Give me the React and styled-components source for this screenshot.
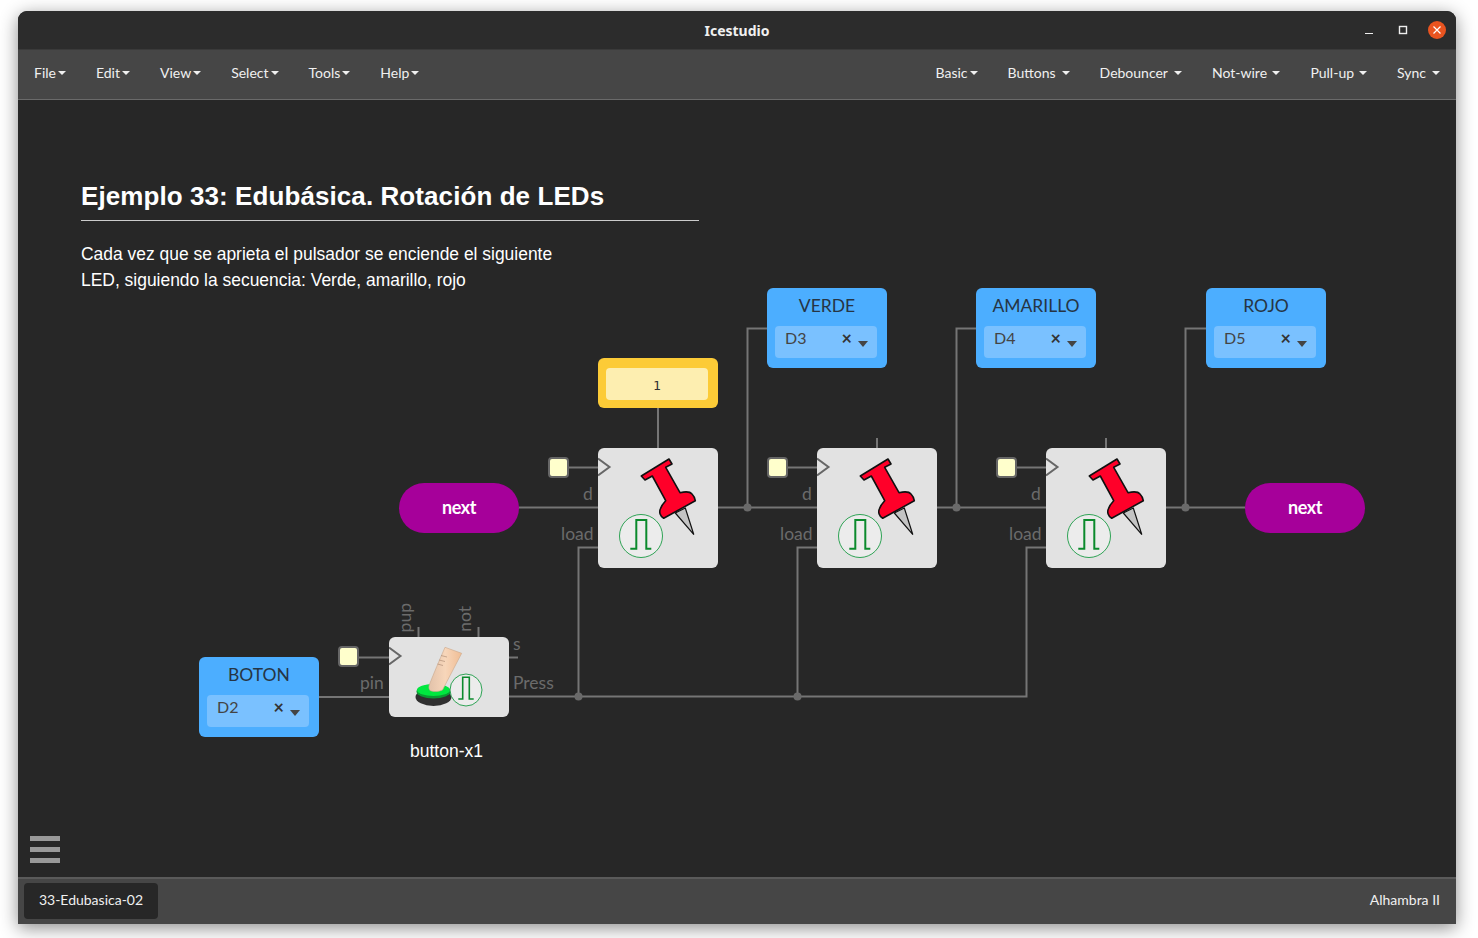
import React from 'react';
import styled, { createGlobalStyle } from 'styled-components';

const Global = createGlobalStyle`
  html, body { margin: 0; padding: 0; height: 100%; overflow: hidden; background: #fff; }
  * { box-sizing: border-box; }
`;

const Win = styled.div`
  position: relative;
  width: 1438px;
  height: 913px;
  margin: 11px 0 0 18px;
  display: flex;
  flex-direction: column;
  border-radius: 9px 9px 0 0;
  overflow: hidden;
  background: #272727;
  font-family: Lato, sans-serif;
`;

const Shadow = styled.div`
  width: 1438px;
  height: 913px;
  position: absolute;
  left: 18px;
  top: 11px;
  border-radius: 9px 9px 0 0;
  box-shadow: 0 4px 18px rgba(0, 0, 0, 0.45);
`;

const TitleBar = styled.div`
  height: 38px;
  flex: none;
  display: flex;
  align-items: center;
  justify-content: center;
  position: relative;
  background: #2c2c2c;
  color: #f0f0f0;
  font: 700 14px "Noto Sans", sans-serif;
`;

const WinButtons = styled.div`
  position: absolute;
  right: 7px;
  top: 10px;
  display: flex;
  align-items: center;
`;

const MenuBar = styled.div`
  height: 51px;
  flex: none;
  display: flex;
  justify-content: space-between;
  padding: 0 16px 5px;
  background: #464646;
  border-top: 1px solid #3a3a3a;
  border-bottom: 1px solid #6a6a6a;
`;

const MenuGroup = styled.div`
  display: flex;
  align-items: center;
  gap: 30px;
`;

const MenuItem = styled.div`
  display: flex;
  align-items: center;
  color: #f0f0f0;
  font-size: 14px;
`;

const Caret = styled.span`
  width: 0;
  height: 0;
  margin-left: ${p => p.$gap}px;
  margin-top: 2px;
  border-left: 4px solid transparent;
  border-right: 4px solid transparent;
  border-top: 4px solid #f0f0f0;
`;

const Canvas = styled.div`
  flex: 1;
  position: relative;
  background: #272727;
`;

const Wires = styled.svg`
  position: absolute;
  left: 0;
  top: 0;
`;

const Note = styled.div`
  position: absolute;
  left: 63px;
  top: 79px;
  width: 618px;
  color: #fff;
  font-family: "Liberation Sans", sans-serif;
`;

const NoteTitle = styled.h1`
  margin: 0;
  height: 42px;
  font-size: 26px;
  line-height: 34px;
  font-weight: 700;
  letter-spacing: 0.08px;
  border-bottom: 1px solid #ccc;
`;

const NoteText = styled.p`
  margin: 20px 0 0;
  font-size: 17.45px;
  line-height: 26px;
`;

const Placed = styled.div`
  position: absolute;
  left: ${p => p.$x - 18}px;
  top: ${p => p.$y - 100}px;
`;

const PinBox = styled(Placed)`
  width: 120px;
  height: 80px;
  padding: 6px 10px 0 8px;
  border-radius: 6px;
  background: #4caeff;
  text-align: center;
  color: #263544;
  font-size: 17.5px;
  line-height: 24px;
`;

const PinTitle = styled.div`
  margin-right: -2px;
`;

const PinSelect = styled.div`
  height: 32px;
  margin-top: 8px;
  padding: 0 9px 0 10px;
  display: flex;
  align-items: flex-start;
  border-radius: 4px;
  background: #7ac1ff;
  color: #444;
  font-size: 16px;
  line-height: 23px;
`;

const PinValue = styled.span`
  flex: 1;
  text-align: left;
`;

const PinClear = styled.span`
  margin-right: 6px;
  color: #333;
  font-weight: 700;
  font-size: 18px;
  line-height: 24px;
`;

const PinCaret = styled.span`
  width: 0;
  height: 0;
  margin-top: 15px;
  border-left: 5px solid transparent;
  border-right: 5px solid transparent;
  border-top: 6px solid #444;
`;

const Constant = styled(Placed)`
  width: 120px;
  height: 50px;
  padding: 10px 10px 8px 8px;
  border-radius: 6px;
  background: #fccb37;
`;

const ConstantField = styled.div`
  height: 32px;
  border-radius: 4px;
  background: #fdeeb0;
  color: #333;
  text-align: center;
  font: 13px/35px "DejaVu Sans Mono", monospace;
`;

const Block = styled(Placed)`
  width: 120px;
  height: ${p => p.$h}px;
  border-radius: 6px;
  background: #e2e2e2;
`;

const BlockIcon = styled.svg`
  position: absolute;
  left: 0;
  top: 0;
`;

const Pad = styled(Placed)`
  width: 21px;
  height: 21px;
  border-radius: 4px;
  border: 2px solid #666;
  background: #ffffcc;
`;

const NextPill = styled(Placed)`
  width: 120px;
  height: 50px;
  border-radius: 25px;
  background: #a6009a;
  color: #fff;
  text-align: center;
  font-size: 18px;
  font-weight: 700;
  line-height: 48px;
  letter-spacing: -0.4px;
`;

const PortLabel = styled(Placed)`
  color: #6b6b6b;
  font-size: 17.5px;
  line-height: 22px;
`;

const SideLabel = styled(PortLabel)`
  writing-mode: vertical-rl;
  transform: rotate(180deg);
  line-height: 20px;
`;

const BlockName = styled(Placed)`
  color: #fff;
  font-family: "Liberation Sans", sans-serif;
  font-size: 17.5px;
  line-height: 22px;
`;

const Burger = styled.div`
  position: absolute;
  left: 12px;
  bottom: 14px;
  width: 30px;
  height: 27px;
  display: flex;
  flex-direction: column;
  justify-content: space-between;
`;

const BurgerBar = styled.span`
  height: 5px;
  background: #999;
`;

const Footer = styled.div`
  height: 47px;
  flex: none;
  display: flex;
  align-items: center;
  justify-content: space-between;
  padding: 0 16px 5px 6px;
  background: #464646;
  border-top: 2px solid #5a5a5a;
  color: #f0f0f0;
  font-size: 14px;
`;

const Tab = styled.div`
  width: 134px;
  height: 36px;
  margin-top: 4px;
  border-radius: 4px;
  background: #272727;
  text-align: center;
  line-height: 34px;
`;

const leftMenu = ['File', 'Edit', 'View', 'Select', 'Tools', 'Help'];
const rightMenu = [['Basic', 2], ['Buttons', 6], ['Debouncer', 6], ['Not-wire', 5.4], ['Pull-up', 5], ['Sync', 6]];

const wirePaths = [
  'M519 507.5H598', 'M718 507.5H817', 'M937 507.5H1046', 'M1166 507.5H1245',
  'M658 408V448', 'M568 467.5H598', 'M787 467.5H817', 'M1016 467.5H1046',
  'M877 438V448', 'M1106 438V448',
  'M747.5 507V328.5H767', 'M956.5 507V328.5H976', 'M1185.5 507V328.5H1206',
  'M598 547.5H578.5V697', 'M817 547.5H797.5V697', 'M1046 547.5H1026.5V696.5H509',
  'M319 697H389', 'M359 657.5H389', 'M418.5 627V637', 'M478.5 627V637', 'M509 657.5H518',
];
const junctions = [[747.5, 507.5], [956.5, 507.5], [1185.5, 507.5], [578.5, 696.5], [797.5, 696.5]];

function Pulse({ cx, cy, r, d, width }) {
  return (
    <>
      <circle cx={cx} cy={cy} r={r} fill="#ececec" stroke="#2fa355" strokeWidth="1" />
      <path d={d} fill="none" stroke="#0b8a2c" strokeWidth={width} />
    </>
  );
}

function Chevron() {
  return <path d="M0 10.5L11.5 19L0 27.5" fill="none" stroke="#666" strokeWidth="2" />;
}

function PinIcon() {
  return (
    <BlockIcon width="120" height="120" viewBox="0 0 120 120">
      <Chevron />
      <path d="M77.3 65L87.3 60L95.7 86.3Z" fill="#c4c4c4" stroke="#111" strokeWidth="1.2" strokeLinejoin="round" />
      <path
        d="M43.3 28L71 11L74 16L67.7 19.3L82 44.7C87 43.5 92 43.5 94 46C96 48 97 50.5 97.3 52.7L65.7 70.3C62 68 61 64 62.3 61C63.5 57.5 65.5 55 67.7 52.7L54.3 28L47 32Z"
        fill="#ff0029"
        stroke="#111"
        strokeWidth="1.6"
        strokeLinejoin="round"
      />
      <Pulse cx={43} cy={88} r={21.5} width={2} d="M32.3 100.7H38.3V72H48.3V100.7H53.3" />
    </BlockIcon>
  );
}

function ButtonIcon() {
  return (
    <BlockIcon width="120" height="80" viewBox="0 0 120 80">
      <defs>
        <linearGradient id="skin" x1="0" y1="0" x2="1" y2="0">
          <stop offset="0" stopColor="#e2c2aa" />
          <stop offset="0.5" stopColor="#f7d6ba" />
          <stop offset="1" stopColor="#f0bd94" />
        </linearGradient>
      </defs>
      <Chevron />
      <ellipse cx="44.5" cy="60" rx="18" ry="9" fill="#303030" />
      <ellipse cx="44.5" cy="54.5" rx="17" ry="7" fill="#0a9a33" />
      <ellipse cx="44.5" cy="53" rx="16.5" ry="6" fill="#00e83f" />
      <path
        d="M56 10.3L72.7 16.3L53.5 53C49 55 44 55 41 53.5C39.5 51.5 39.5 49 41 46C45 36 50 24 56 10.3Z"
        fill="url(#skin)"
        stroke="#c9a78c"
        strokeWidth="0.6"
      />
      <path d="M52 18.5L58 20M50 23L56 24.5M48.5 27L54 28.5" stroke="#b08f78" strokeWidth="0.7" fill="none" />
      <Pulse cx={77} cy={53} r={16} width={1.6} d="M69.3 62H73.7V40.3H80.3V62H84.7" />
    </BlockIcon>
  );
}

function PinBlock({ x, y, name, pin }) {
  return (
    <PinBox $x={x} $y={y}>
      <PinTitle>{name}</PinTitle>
      <PinSelect>
        <PinValue>{pin}</PinValue>
        <PinClear>×</PinClear>
        <PinCaret />
      </PinSelect>
    </PinBox>
  );
}

function PinStage({ x, padX }) {
  return (
    <>
      <Pad $x={padX} $y={457} />
      <Block $x={x} $y={448} $h={120}>
        <PinIcon />
      </Block>
      <PortLabel $x={x - 15} $y={483}>d</PortLabel>
      <PortLabel $x={x - 37} $y={523}>load</PortLabel>
    </>
  );
}

export default function App() {
  return (
    <>
      <Global />
      <Shadow />
      <Win>
        <TitleBar>
          Icestudio
          <WinButtons>
            <svg width="84" height="20" viewBox="0 0 84 20">
              <path d="M0 12.5H8" stroke="#eee" strokeWidth="1" />
              <rect x="34.5" y="5.5" width="7" height="7" fill="none" stroke="#eee" strokeWidth="1.4" />
              <circle cx="72" cy="9" r="9" fill="#e95420" />
              <path d="M68.5 5.5L75.5 12.5M75.5 5.5L68.5 12.5" stroke="#fff" strokeWidth="1.2" />
            </svg>
          </WinButtons>
        </TitleBar>
        <MenuBar>
          <MenuGroup>
            {leftMenu.map(m => (
              <MenuItem key={m}>{m}<Caret $gap={2} /></MenuItem>
            ))}
          </MenuGroup>
          <MenuGroup>
            {rightMenu.map(([m, gap]) => (
              <MenuItem key={m}>{m}<Caret $gap={gap} /></MenuItem>
            ))}
          </MenuGroup>
        </MenuBar>
        <Canvas>
          <Wires width="1438" height="777" viewBox="18 100 1438 777">
            {wirePaths.map(d => (
              <path key={d} d={d} fill="none" stroke="#757575" strokeWidth="2" />
            ))}
            {junctions.map(([cx, cy]) => (
              <circle key={cx} cx={cx} cy={cy} r="4" fill="#6a6a6a" />
            ))}
          </Wires>

          <Note>
            <NoteTitle>Ejemplo 33: Edubásica. Rotación de LEDs</NoteTitle>
            <NoteText>
              Cada vez que se aprieta el pulsador se enciende el siguiente
              <br />
              LED, siguiendo la secuencia: Verde, amarillo, rojo
            </NoteText>
          </Note>

          <PinBlock x={767} y={288} name="VERDE" pin="D3" />
          <PinBlock x={976} y={288} name="AMARILLO" pin="D4" />
          <PinBlock x={1206} y={288} name="ROJO" pin="D5" />
          <PinBlock x={199} y={657} name="BOTON" pin="D2" />

          <Constant $x={598} $y={358}>
            <ConstantField>1</ConstantField>
          </Constant>

          <NextPill $x={399} $y={483}>next</NextPill>
          <NextPill $x={1245} $y={483}>next</NextPill>

          <PinStage x={598} padX={548} />
          <PinStage x={817} padX={767} />
          <PinStage x={1046} padX={996} />

          <Pad $x={338} $y={646} />
          <Block $x={389} $y={637} $h={80}>
            <ButtonIcon />
          </Block>
          <PortLabel $x={360} $y={672}>pin</PortLabel>
          <PortLabel $x={513} $y={633}>s</PortLabel>
          <PortLabel $x={513} $y={672}>Press</PortLabel>
          <SideLabel $x={395} $y={603}>pup</SideLabel>
          <SideLabel $x={455} $y={606}>not</SideLabel>
          <BlockName $x={410} $y={740}>button-x1</BlockName>

          <Burger>
            <BurgerBar />
            <BurgerBar />
            <BurgerBar />
          </Burger>
        </Canvas>
        <Footer>
          <Tab>33-Edubasica-02</Tab>
          Alhambra II
        </Footer>
      </Win>
    </>
  );
}
